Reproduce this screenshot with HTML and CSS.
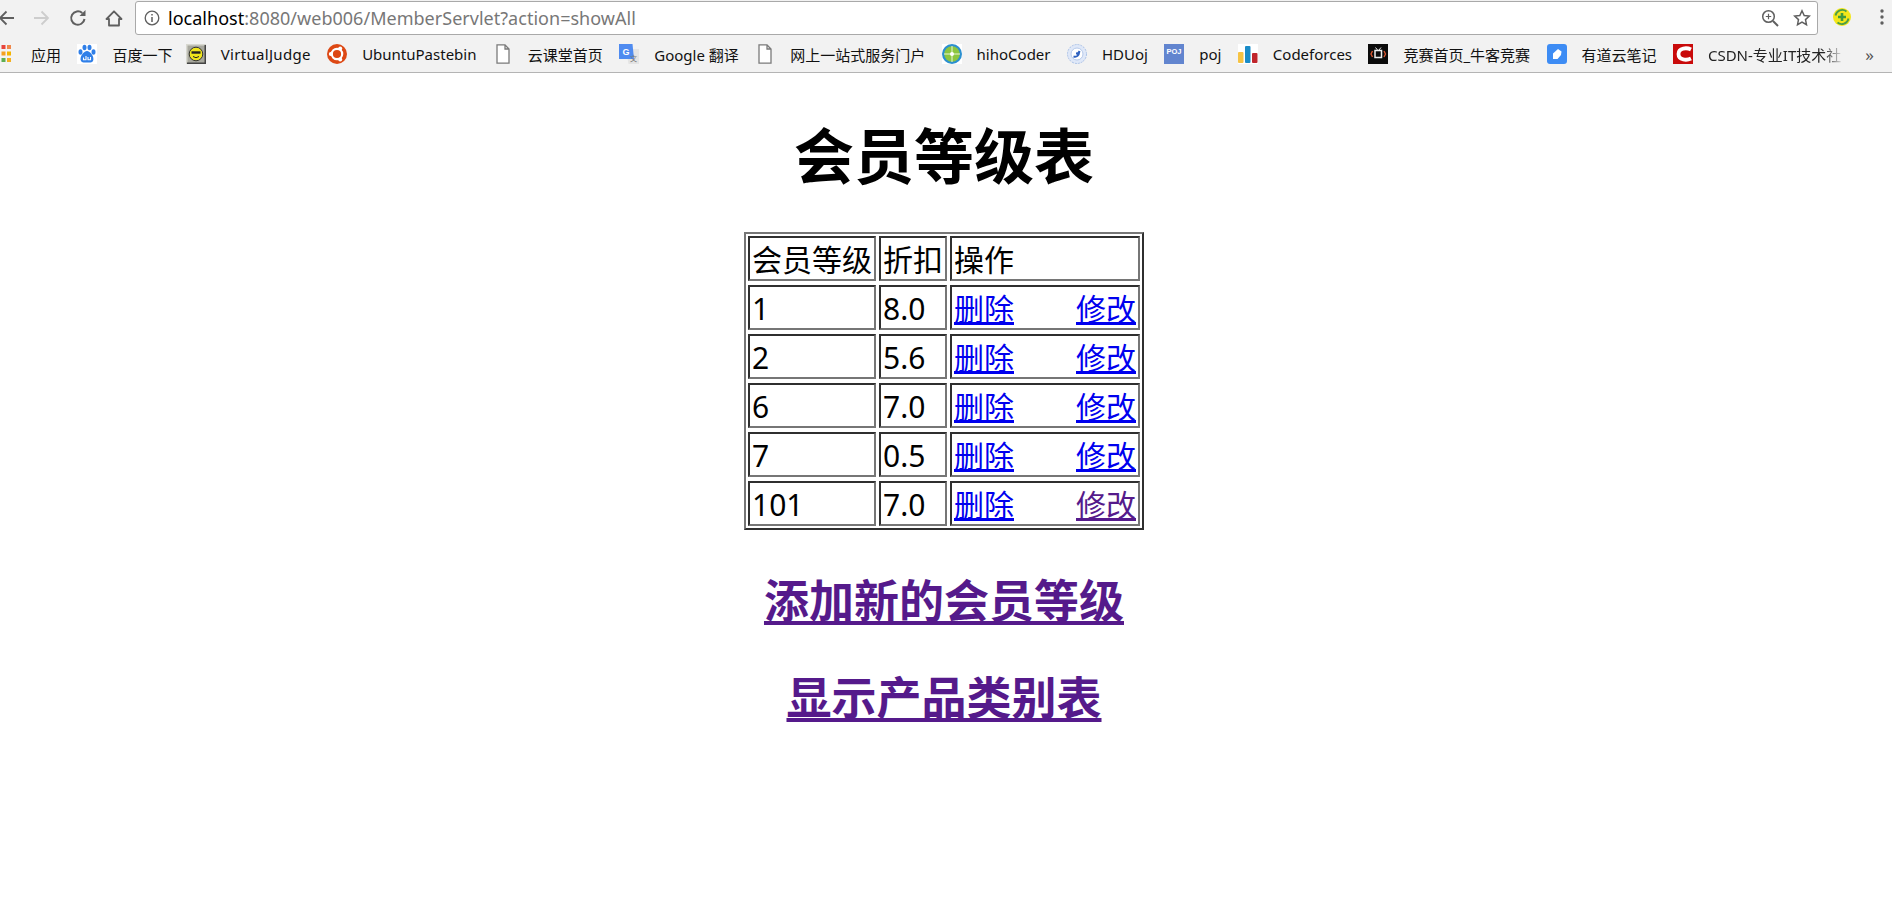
FILE: index.html
```html
<!DOCTYPE html>
<html lang="zh">
<head>
<meta charset="utf-8">
<title>会员等级表</title>
<link rel="stylesheet" href="styles.css">
</head>
<body>
<header class="chrome">
  <div class="toolbar">
    <div class="nav">
      <svg class="nav-icon" viewBox="0 0 18 18"><path d="M17 9H3M9.500 2.500 3 9l6.500 6.500" fill="none" stroke="#5f5f5f" stroke-width="1.800"/></svg>
      <svg class="nav-icon" viewBox="0 0 18 18"><path d="M1 9h14M8.500 2.500 15 9l-6.500 6.500" fill="none" stroke="#cdcdcd" stroke-width="1.800"/></svg>
      <svg class="nav-icon" viewBox="0 0 18 18"><path d="M15.500 10A6.700 6.700 0 1 1 13.300 4" fill="none" stroke="#5f5f5f" stroke-width="2"/><path d="M10.500 7H16.500V1z" fill="#5f5f5f"/></svg>
      <svg class="nav-icon" viewBox="0 0 18 18"><path d="M1.500 10 9 2.300 16.500 10H14v6.500H4V10z" fill="none" stroke="#5f5f5f" stroke-width="1.800" stroke-linejoin="round"/></svg>
    </div>
    <div class="omnibox">
      <svg class="info" viewBox="0 0 16 16"><circle cx="8" cy="8" r="6.800" fill="none" stroke="#5f5f5f" stroke-width="1.300"/><path d="M8 7v5M8 4v1.600" stroke="#5f5f5f" stroke-width="1.500"/></svg>
      <div class="url"><span class="host">localhost</span>:8080/web006/MemberServlet?action=showAll</div>
      <svg class="omni-icon" viewBox="0 0 18 18"><circle cx="7.500" cy="7.500" r="5.800" fill="none" stroke="#5f5f5f" stroke-width="1.500"/><path d="M12 12l5 5" stroke="#5f5f5f" stroke-width="2"/><path d="M7.500 4.800v5.400M4.800 7.500h5.400" stroke="#5f5f5f" stroke-width="1.200"/></svg>
      <svg class="omni-icon" viewBox="0 0 18 18"><path d="M9 1.800l2.200 4.700 5.100.6-3.800 3.500 1 5.100L9 13.200l-4.500 2.500 1-5.100L1.700 7.100l5.100-.6z" fill="none" stroke="#5f5f5f" stroke-width="1.500"/></svg>
    </div>
    <svg class="ext" viewBox="0 0 18 18"><circle cx="9" cy="9" r="9" fill="#f3e61a"/><path d="M2.500 7.500A6.800 6.800 0 0 1 13.500 3.500M15.500 10.500A6.800 6.800 0 0 1 4.500 14.500" fill="none" stroke="#4d9e46" stroke-width="1.800"/><path d="M9 5v8M5 9h8" stroke="#3f9a3e" stroke-width="2.600"/></svg>
    <svg class="menu" viewBox="0 0 4 16"><circle cx="2" cy="2" r="1.700" fill="#5f5f5f"/><circle cx="2" cy="8" r="1.700" fill="#5f5f5f"/><circle cx="2" cy="14" r="1.700" fill="#5f5f5f"/></svg>
  </div>
  <nav class="bookmarks">
    <div class="mark"><svg class="mi" viewBox="0 0 20 20"><rect x="0" y="1" width="4" height="4" fill="#ea7c70"/><rect x="5.500" y="1" width="4" height="4" fill="#e8453c"/><rect x="11" y="1" width="4" height="4" fill="#f0884a"/><rect x="0" y="7.500" width="4" height="4" fill="#7aa0d8"/><rect x="5.500" y="7.500" width="4" height="4" fill="#f4a020"/><rect x="11" y="7.500" width="4" height="4" fill="#f4b400"/><rect x="0" y="14" width="4" height="4" fill="#3fa45f"/><rect x="5.500" y="14" width="4" height="4" fill="#5fae52"/><rect x="11" y="14" width="4" height="4" fill="#f4b020"/></svg><span>应用</span></div>
    <div class="mark"><svg class="mi" viewBox="0 0 20 20"><rect width="20" height="20" fill="#fff"/><g fill="#2f7fe8"><ellipse cx="3.500" cy="8" rx="2" ry="2.800"/><ellipse cx="7.500" cy="3.500" rx="2" ry="2.800"/><ellipse cx="12.500" cy="3.500" rx="2" ry="2.800"/><ellipse cx="16.500" cy="8" rx="2" ry="2.800"/><path d="M10 7c3 0 8 6 6 10-1 2-4 1.500-6 1.500S5 19 4 17C2 13 7 7 10 7z"/></g><path d="M6.500 13.500v2.200h2.500V12M11 13v2.700h2.500V13" fill="none" stroke="#fff" stroke-width="1.100"/></svg><span>百度一下</span></div>
    <div class="mark tight"><svg class="mi" viewBox="0 0 20 20"><rect width="20" height="20" fill="#a8a89e"/><path d="M0 0h20v1.500H1.500V20H0z" fill="#d8d8d0"/><path d="M20 20H1v-1.500h17.500V1H20z" fill="#444"/><circle cx="10" cy="10" r="6.800" fill="#f0e61c" stroke="#333"/><path d="M5.500 8.500h9" stroke="#222" stroke-width="2.400"/><path d="M7 12.500q3 2.500 6 0" fill="none" stroke="#222"/></svg><span class="wide">VirtualJudge</span></div>
    <div class="mark"><svg class="mi" viewBox="0 0 20 20"><circle cx="10" cy="10" r="10" fill="#dd4814"/><circle cx="10" cy="10" r="5.200" fill="none" stroke="#fff" stroke-width="2.200"/><circle cx="3.800" cy="10" r="2" fill="#fff"/><circle cx="13.200" cy="4.600" r="2" fill="#fff"/><circle cx="13.200" cy="15.400" r="2" fill="#fff"/></svg><span>UbuntuPastebin</span></div>
    <div class="mark doc"><svg class="mi" viewBox="0 0 14 20"><path d="M1 .8h8l4 4.200v14.200H1zM9 .8V5h4" fill="#fff" stroke="#7a7a7a" stroke-width="1.300"/></svg><span>云课堂首页</span></div>
    <div class="mark"><svg class="mi" viewBox="0 0 20 20"><path d="M7 5h13v15H9.500z" fill="#e4e4e4"/><path d="M0 0h13.500l1.500 15H0z" fill="#4f8bf0"/><text class="g-logo" x="7" y="11">G</text><text class="zh-logo" x="14.500" y="17">文</text></svg><span>Google 翻译</span></div>
    <div class="mark doc"><svg class="mi" viewBox="0 0 14 20"><path d="M1 .8h8l4 4.200v14.200H1zM9 .8V5h4" fill="#fff" stroke="#7a7a7a" stroke-width="1.300"/></svg><span>网上一站式服务门户</span></div>
    <div class="mark"><svg class="mi" viewBox="0 0 20 20"><rect width="20" height="20" fill="#fff"/><circle cx="10" cy="10" r="10" fill="#2b8fd0"/><circle cx="10" cy="10" r="7.800" fill="#8cc63f"/><path d="M10 2v16M2 10h16" stroke="#e8f3d8"/><circle cx="10" cy="10" r="2" fill="#fff"/></svg><span>hihoCoder</span></div>
    <div class="mark"><svg class="mi" viewBox="0 0 20 20"><circle cx="10" cy="10" r="9.500" fill="#dfe8f8" stroke="#a9c0e6" stroke-dasharray="2 1"/><circle cx="10" cy="10" r="6" fill="#fff" stroke="#b5c9ea"/><path d="M6.500 12.500q5 1.500 6-5.500-1 2.500-3.500 2.500" fill="none" stroke="#2f62c0" stroke-width="1.900"/></svg><span>HDUoj</span></div>
    <div class="mark"><svg class="mi" viewBox="0 0 20 20"><rect width="20" height="20" fill="#6285cf"/><text class="poj-logo" x="10" y="10">POJ</text></svg><span>poj</span></div>
    <div class="mark"><svg class="mi" viewBox="0 0 20 20"><rect width="20" height="20" fill="#fff"/><rect x="0" y="8" width="5.500" height="11" rx="1" fill="#f6c343"/><rect x="7" y="2" width="5.500" height="17" rx="1" fill="#1a8cc8"/><rect x="14" y="9" width="5.500" height="10" rx="1" fill="#c0262c"/></svg><span>Codeforces</span></div>
    <div class="mark"><svg class="mi" viewBox="0 0 20 20"><rect width="20" height="20" fill="#0b0b0b"/><path d="M7 6.500h6.500v7H7z" fill="none" stroke="#eee" stroke-width="1.500"/><path d="M4.500 7 3 10l1.500 3M16 7l1.500 3L16 13" fill="none" stroke="#d8552f" stroke-width="1.400"/><path d="M7.500 3.500 9.500 6M13 3.500 11 6" stroke="#eee"/></svg><span>竞赛首页_牛客竞赛</span></div>
    <div class="mark"><svg class="mi" viewBox="0 0 20 20"><rect width="20" height="20" rx="3" fill="#3d8cf4"/><path d="M6 9.500 11 5l3.500 2.500-.5 3.500-3.500 4H6z" fill="#fff"/></svg><span>有道云笔记</span></div>
    <div class="mark"><svg class="mi" viewBox="0 0 20 20"><rect width="20" height="20" fill="#c90a0a"/><path d="M18 5.500C14 3.500 5.500 3.500 5.500 10S14 16.500 18 14.500" fill="none" stroke="#fff" stroke-width="3.800"/></svg><span class="fade">CSDN-专业IT技术社</span></div>
    <div class="more">»</div>
  </nav>
</header>
<main class="page">
  <h1 class="title">会员等级表</h1>
  <div class="frame">
  <table class="levels">
    <tr><td class="c1">会员等级</td><td class="c2">折扣</td><td class="c3">操作</td></tr>
    <tr><td>1</td><td>8.0</td><td><div class="ops"><a href="#d1">删除</a><a href="#e1">修改</a></div></td></tr>
    <tr><td>2</td><td>5.6</td><td><div class="ops"><a href="#d2">删除</a><a href="#e2">修改</a></div></td></tr>
    <tr><td>6</td><td>7.0</td><td><div class="ops"><a href="#d6">删除</a><a href="#e6">修改</a></div></td></tr>
    <tr><td>7</td><td>0.5</td><td><div class="ops"><a href="#d7">删除</a><a href="#e7">修改</a></div></td></tr>
    <tr><td>101</td><td>7.0</td><td><div class="ops"><a href="#d101">删除</a><a class="visited" href="#e101">修改</a></div></td></tr>
  </table>
  </div>
  <h2 class="link first"><a class="visited" href="#add">添加新的会员等级</a></h2>
  <h2 class="link"><a class="visited" href="#types">显示产品类别表</a></h2>
</main>
</body>
</html>
```

FILE: styles.css
```css
* { box-sizing: border-box; }
html, body { margin: 0; height: 900px; overflow: hidden; background: #fff; }
body { font-family: "Noto Sans", "Noto Sans CJK SC", sans-serif; color: #000; }

.chrome { background: #f2f2f2; height: 73px; border-bottom: 1px solid #b4b4b4; }
.toolbar { height: 36px; display: flex; align-items: flex-start; }
.nav { display: flex; width: 135px; padding-top: 9px; margin-left: -3px; gap: 18px; flex: none; }
.nav-icon { width: 18px; height: 18px; flex: none; }
.omnibox { width: 1683px; height: 34px; margin-top: 1px; margin-left: 3px; background: #fff; border: 1px solid #a9a9a9; border-radius: 3px; display: flex; align-items: center; padding: 0 6px 0 8px; flex: none; }
.info { width: 16px; height: 16px; flex: none; }
.url { flex: 1; margin-left: 8px; font-size: 18px; line-height: 32px; color: #777; white-space: nowrap; letter-spacing: .02px; }
.host { color: #000; }
.omni-icon { width: 18px; height: 18px; flex: none; margin-left: 14px; }
.ext { width: 18px; height: 18px; margin: 8px 0 0 15px; flex: none; }
.menu { width: 4px; height: 16px; margin: 9px 0 0 29px; flex: none; }

.bookmarks { height: 36px; display: flex; align-items: center; gap: 16.4px; font-size: 15px; white-space: nowrap; color: #111; margin-left: -4px; }
.mark { display: flex; align-items: center; gap: 15px; flex: none; }
.tight { margin-left: -3px; }
.mi { width: 20px; height: 20px; flex: none; }
.doc .mi { width: 14px; margin: 0 3px; }
.wide { letter-spacing: .3px; }
.poj-logo { font: bold 7.500px "Liberation Sans", sans-serif; fill: #fff; text-anchor: middle; }
.g-logo { font: bold 9px "Liberation Sans", sans-serif; fill: #fff; text-anchor: middle; }
.zh-logo { font: 7px "Noto Sans CJK SC", sans-serif; fill: #777; text-anchor: middle; }
.fade { width: 136px; overflow: hidden; color: #222; -webkit-mask-image: linear-gradient(90deg, #000 85%, transparent); mask-image: linear-gradient(90deg, #000 85%, transparent); }
.more { font-size: 17px; color: #555; margin-left: 5px; line-height: 1; }

.page { padding-right: 4px; display: flex; flex-direction: column; align-items: center; }
.title { font-size: 60px; line-height: 80px; font-weight: 700; margin: 43px 0 0; }
.frame { width: 400px; border: 2px solid; border-color: #767676 #2f2f2f #2f2f2f #767676; margin-top: 36px; }
.levels { border-collapse: separate; border-spacing: 3px 4px; margin: -2px -1px; width: 398px; font-size: 30px; }
.levels td { height: 45px; padding: 2px 2px 0; line-height: 39px; border: 2px solid; border-color: #2f2f2f #767676 #767676 #2f2f2f; white-space: nowrap; }
.c1 { width: 128px; }
.c2 { width: 68px; }
.ops { display: flex; justify-content: space-between; }
a { color: #0000ee; }
a.visited { color: #551a8b; }
.link { font-size: 45px; line-height: 60px; font-weight: 700; margin: 0; }
.link.first { margin-top: 41px; }
.link + .link { margin-top: 37px; }
```
